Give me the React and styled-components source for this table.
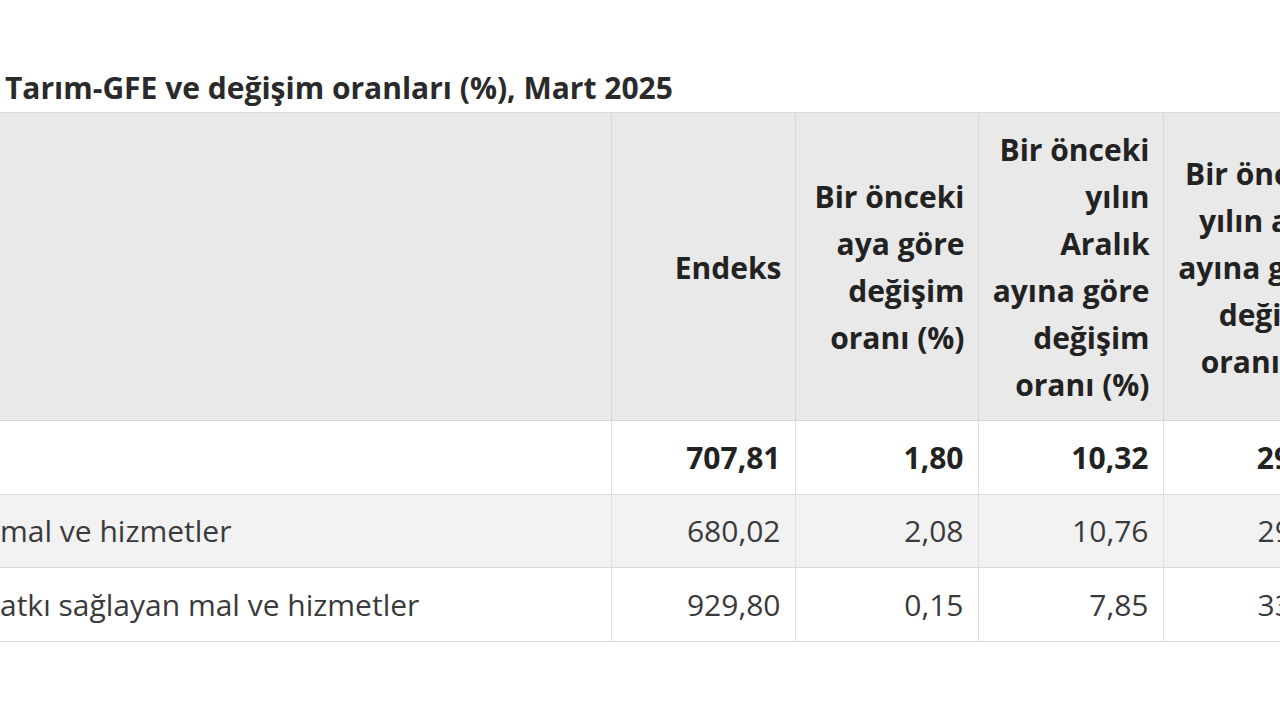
import styled, { createGlobalStyle } from "styled-components";

const Global = createGlobalStyle`
  html, body {
    margin: 0;
    padding: 0;
    background: #fff;
    overflow: hidden;
  }
  body {
    font-family: "Open Sans", "Noto Sans", sans-serif;
    color: #2b2b2b;
  }
`

const Page = styled.div`
  width: 1280px;
  height: 720px;
  overflow: hidden;
  padding-top: 64px;
  box-sizing: border-box;
`

const Title = styled.h2`
  margin: 0;
  padding-left: 5px;
  font-size: 30px;
  font-weight: 700;
  line-height: 48px;
  color: #2a2a2a;
  white-space: nowrap;
`

const Table = styled.table`
  border-collapse: collapse;
  table-layout: fixed;
  width: 1348px;
  font-size: 30px;
`

const HeadCell = styled.th`
  background: #e9e9e9;
  border-left: 1px solid #d8d8d8;
  border-top: 1px solid #dcdcdc;
  border-bottom: 1px solid #d4d4d4;
  text-align: right;
  vertical-align: middle;
  padding: 13px 13px 12px;
  font-weight: 700;
  line-height: 47px;
  color: #222;
  white-space: pre-line;
  &:first-child {
    border-left: none;
  }
`

const Row = styled.tr`
  background: ${(p) => (p.$shade ? "#f2f2f2" : "#fff")};
  height: 73.5px;
`

const Cell = styled.td`
  border-left: 1px solid #dedede;
  border-bottom: 1px solid #dadada;
  padding: 0 14px;
  text-align: ${(p) => (p.$label ? "left" : "right")};
  font-weight: ${(p) => (p.$bold ? 700 : 400)};
  color: ${(p) => (p.$bold ? "#222" : "#3a3a3a")};
  white-space: nowrap;
  overflow: hidden;
  &:first-child {
    border-left: none;
    padding-left: 0;
  }
`

const widths = [611, 184, 183, 185, 185]

const headers = [
  "",
  "Endeks",
  "Bir önceki\naya göre\ndeğişim\noranı (%)",
  "Bir önceki\nyılın\nAralık\nayına göre\ndeğişim\noranı (%)",
  "Bir önceki\nyılın aynı\nayına göre\ndeğişim\noranı (%)",
]

const rows = [
  { label: "", values: ["707,81", "1,80", "10,32", "29,52"], bold: true },
  { label: "mal ve hizmetler", values: ["680,02", "2,08", "10,76", "29,17"], shade: true },
  { label: "atkı sağlayan mal ve hizmetler", values: ["929,80", "0,15", "7,85", "33,46"] },
]

export default function App() {
  return (
    <Page>
      <Global />
      <Title>Tarım-GFE ve değişim oranları (%), Mart 2025</Title>
      <Table>
        <colgroup>
          {widths.map((w, i) => (
            <col key={i} style={{ width: w }} />
          ))}
        </colgroup>
        <thead>
          <tr>
            {headers.map((h, i) => (
              <HeadCell key={i}>{h}</HeadCell>
            ))}
          </tr>
        </thead>
        <tbody>
          {rows.map((r, i) => (
            <Row key={i} $shade={r.shade}>
              <Cell $label $bold={r.bold}>{r.label}</Cell>
              {r.values.map((v, j) => (
                <Cell key={j} $bold={r.bold}>{v}</Cell>
              ))}
            </Row>
          ))}
        </tbody>
      </Table>
    </Page>
  )
}
